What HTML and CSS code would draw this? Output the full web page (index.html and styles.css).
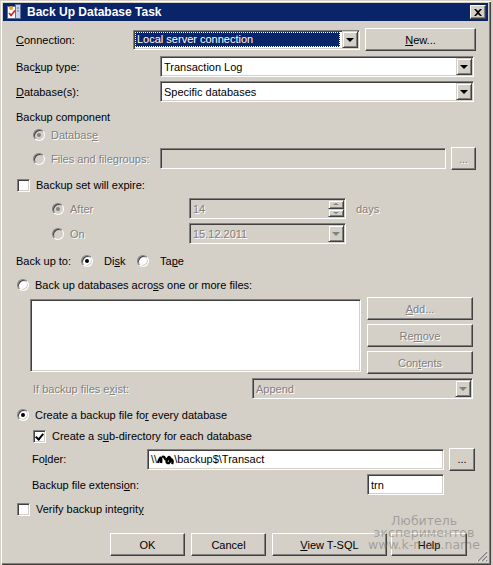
FILE: index.html
```html
<!DOCTYPE html>
<html lang="en">
<head>
  <meta charset="UTF-8" />
  <title>Back Up Database Task</title>
  <link rel="stylesheet" href="styles.css">
</head>
<body>
  <div class="window">
    <div class="titlebar">
      <svg class="app-icon" width="16" height="16" viewBox="0 0 16 16">
        <rect x="1.5" y="2.5" width="9" height="12" fill="#fff" stroke="#5a6f9a"/>
        <rect x="9.5" y="0.5" width="5" height="14" fill="#c8d4e8" stroke="#5a6f9a"/>
        <line x1="11" y1="4" x2="13" y2="4" stroke="#5a6f9a"/>
        <line x1="11" y1="7" x2="13" y2="7" stroke="#5a6f9a"/>
        <circle cx="5" cy="4" r="2" fill="#e8a030"/>
        <path d="M3 9 L5 11.5 L9 6.5" fill="none" stroke="#d02020" stroke-width="1.6"/>
      </svg>
      <span class="title">Back Up Database Task</span>
      <span class="close">
        <svg width="8" height="7" viewBox="0 0 8 7"><path d="M0 0h2l2 2 2-2h2L5 3.5 8 7H6L4 5 2 7H0l3-3.5z" fill="#000"/></svg>
      </span>
    </div>

    <div class="content">
      <div class="row r1">
        <span class="lbl w-conn"><u>C</u>onnection:</span>
        <div class="combo c-conn">
          <span class="val selected">Local server connection</span>
          <span class="drop"></span>
        </div>
        <button class="btn b-new"><u>N</u>ew...</button>
      </div>

      <div class="row r2">
        <span class="lbl w-type">Bac<u>k</u>up type:</span>
        <div class="combo c-wide">
          <span class="val">Transaction Log</span>
          <span class="drop"></span>
        </div>
      </div>

      <div class="row r3">
        <span class="lbl w-type"><u>D</u>atabase(s):</span>
        <div class="combo c-wide">
          <span class="val">Specific databases</span>
          <span class="drop"></span>
        </div>
      </div>

      <div class="row r4">
        <span class="lbl">Backup component</span>
      </div>

      <div class="row r5 ind1">
        <span class="radio checked disabled"></span>
        <span class="lbl dis">Databas<u>e</u></span>
      </div>

      <div class="row r6 ind1">
        <span class="radio disabled"></span>
        <span class="lbl dis w-files">Files and file<u>g</u>roups:</span>
        <div class="field disabled f-files"></div>
        <button class="btn b-dots dis">...</button>
      </div>

      <div class="row r7 ind0">
        <span class="check"></span>
        <span class="lbl">Backup set will expire:</span>
      </div>

      <div class="row r8 ind2">
        <span class="radio checked disabled"></span>
        <span class="lbl dis w-after">After</span>
        <div class="field disabled f-spin">
          <span class="val dis">14</span>
          <span class="spin">
            <span class="spin-btn up"></span>
            <span class="spin-btn down"></span>
          </span>
        </div>
        <span class="lbl dis days">days</span>
      </div>

      <div class="row r9 ind2">
        <span class="radio disabled"></span>
        <span class="lbl dis w-after">On</span>
        <div class="combo disabled f-spin">
          <span class="val dis">15.12.2011</span>
          <span class="drop"></span>
        </div>
      </div>

      <div class="row r10">
        <span class="lbl w-backto">Back up to:</span>
        <span class="radio checked"></span>
        <span class="lbl w-disk">Di<u>s</u>k</span>
        <span class="radio"></span>
        <span class="lbl">Ta<u>p</u>e</span>
      </div>

      <div class="row r11 ind0">
        <span class="radio"></span>
        <span class="lbl">Back up databases acro<u>s</u>s one or more files:</span>
      </div>

      <div class="row r12">
        <div class="listbox"></div>
        <div class="side-buttons">
          <button class="btn b-side dis"><u>A</u>dd...</button>
          <button class="btn b-side dis">Re<u>m</u>ove</button>
          <button class="btn b-side dis">Con<u>t</u>ents</button>
        </div>
      </div>

      <div class="row r13">
        <span class="lbl dis w-exist">If backup files e<u>x</u>ist:</span>
        <div class="combo disabled c-append">
          <span class="val dis">Append</span>
          <span class="drop"></span>
        </div>
      </div>

      <div class="row r14 ind0">
        <span class="radio checked"></span>
        <span class="lbl">Create a backup file fo<u>r</u> every database</span>
      </div>

      <div class="row r15 ind1">
        <span class="check checked"></span>
        <span class="lbl sub">Create a s<u>u</u>b-directory for each database</span>
      </div>

      <div class="row r16">
        <span class="lbl w-folder">Fo<u>l</u>der:</span>
        <div class="field f-folder">
          <span class="val">\\<svg class="scribble" width="17" height="11" viewBox="0 0 17 11"><path d="M1 9 C3 2 5 2 4 9 M5 3 C9 1 7 9 11 4 C13 1 15 6 12 9 C9 10 8 5 13 5 C16 5 16 8 15 10" fill="none" stroke="#000" stroke-width="2.4"/></svg>\backup$\Transact</span>
        </div>
        <button class="btn b-dots">...</button>
      </div>

      <div class="row r17">
        <span class="lbl w-ext">Backup file extensi<u>o</u>n:</span>
        <div class="field f-ext"><span class="val">trn</span></div>
      </div>

      <div class="row r18 ind0">
        <span class="check"></span>
        <span class="lbl">Verify backup integrit<u>y</u></span>
      </div>

      <div class="row r19">
        <button class="btn b-ok">OK</button>
        <button class="btn b-cancel">Cancel</button>
        <button class="btn b-tsql"><u>V</u>iew T-SQL</button>
        <button class="btn b-help">Help</button>
      </div>
    </div>

    <div class="watermark">Любитель<br>экспериментов<br>www.k-max.name</div>
    <svg class="grip" width="12" height="12" viewBox="0 0 12 12">
      <path d="M11 1 L1 11 M11 5 L5 11 M11 9 L9 11" stroke="#fff" stroke-width="1"/>
      <path d="M11 2 L2 11 M11 6 L6 11 M11 10 L10 11" stroke="#808080" stroke-width="1.2"/>
    </svg>
  </div>
</body>
</html>
```

FILE: styles.css
```css
body {
  margin: 0;
  background: #d4d0c8;
  font-family: "Liberation Sans", Arial, sans-serif;
  font-size: 11px;
  color: #000;
}

.window {
  position: relative;
  width: 491px;
  height: 565px;
  box-sizing: border-box;
  padding: 3px;
  background: #d4d0c8;
  box-shadow: inset 1px 1px #d4d0c8, inset 2px 2px #fff, inset -1px -1px #404040, inset -2px -2px #808080;
}

.titlebar {
  height: 18px;
  background: #0a246a;
  color: #fff;
  display: flex;
  align-items: center;
  padding: 0 2px 0 3px;
}

.app-icon {
  flex: none;
}

.title {
  margin-left: 5px;
  font-weight: bold;
  font-size: 12px;
  flex: 1;
}

.close {
  width: 16px;
  height: 14px;
  box-sizing: border-box;
  background: #d4d0c8;
  border: 1px solid;
  border-color: #fff #404040 #404040 #fff;
  box-shadow: inset -1px -1px #808080;
  display: flex;
  align-items: center;
  justify-content: center;
}

.content {
  padding-left: 13px;
}

.row {
  display: flex;
  align-items: center;
  height: 14px;
}

.lbl {
  white-space: nowrap;
  flex: none;
}

u {
  text-decoration: underline;
  text-underline-offset: 1px;
}

.dis {
  color: #808080;
  text-shadow: 1px 1px #fff;
}

/* vertical rhythm */
.r1 { margin-top: 7px; height: 23px; }
.r2 { margin-top: 5px; height: 21px; }
.r3 { margin-top: 4px; height: 21px; }
.r4 { margin-top: 8px; }
.r5 { margin-top: 4px; }
.r6 { margin-top: 5px; height: 23px; }
.r7 { margin-top: 8px; }
.r8 { margin-top: 6px; height: 21px; }
.r9 { margin-top: 4px; height: 21px; }
.r10 { margin-top: 10px; }
.r11 { margin-top: 10px; }
.r12 { margin-top: 5px; height: 76px; align-items: flex-start; }
.r13 { margin-top: 5px; height: 21px; }
.r14 { margin-top: 9px; }
.r15 { margin-top: 7px; }
.r16 { margin-top: 5px; height: 22px; }
.r17 { margin-top: 4px; height: 21px; }
.r18 { margin-top: 7px; }
.r19 { margin-top: 17px; height: 23px; }

.ind0 { padding-left: 1px; }
.ind1 { padding-left: 17px; }
.ind2 { padding-left: 36px; }

/* label widths */
.w-conn { width: 117px; }
.w-type { width: 144px; }
.w-files { width: 109px; }
.w-after { width: 119px; }
.w-backto { width: 65px; }
.w-disk { width: 33px; }
.w-exist { width: 236px; padding-left: 17px; box-sizing: border-box; }
.w-folder { width: 131px; padding-left: 16px; box-sizing: border-box; }
.w-ext { width: 351px; padding-left: 16px; box-sizing: border-box; }

.radio + .lbl,
.check + .lbl {
  margin-left: 6px;
}

.sub {
  margin-left: 8px;
}

/* controls */
.radio {
  flex: none;
  position: relative;
  width: 12px;
  height: 12px;
  box-sizing: border-box;
  border-radius: 50%;
  background: #fff;
  border: 1px solid;
  border-color: #808080 #fff #fff #808080;
  box-shadow: inset 1px 1px #404040, inset -1px -1px #d4d0c8;
}

.radio.disabled {
  background: #d4d0c8;
}

.radio.checked::after {
  content: "";
  position: absolute;
  left: 3px;
  top: 3px;
  width: 4px;
  height: 4px;
  border-radius: 50%;
  background: #000;
}

.radio.disabled.checked::after {
  background: #808080;
}

.r10 .radio {
  margin-right: 5px;
}

.check {
  flex: none;
  position: relative;
  width: 13px;
  height: 13px;
  box-sizing: border-box;
  background: #fff;
  border: 1px solid;
  border-color: #808080 #fff #fff #808080;
  box-shadow: inset 1px 1px #404040, inset -1px -1px #d4d0c8;
}

.check.checked::after {
  content: "";
  position: absolute;
  left: 3px;
  top: 1px;
  width: 3px;
  height: 6px;
  border: solid #000;
  border-width: 0 2px 2px 0;
  transform: rotate(40deg);
}

.field,
.combo {
  flex: none;
  box-sizing: border-box;
  height: 21px;
  background: #fff;
  border: 1px solid;
  border-color: #808080 #fff #fff #808080;
  box-shadow: inset 1px 1px #404040, inset -1px -1px #d4d0c8;
  display: flex;
  align-items: center;
  padding: 1px;
}

.field.disabled,
.combo.disabled {
  background: #d4d0c8;
}

.val {
  flex: 1;
  padding-left: 2px;
  white-space: nowrap;
  overflow: hidden;
}

.val.selected {
  background: #0a246a;
  color: #fff;
  outline: 1px dotted #fff;
  outline-offset: -1px;
  margin-right: 2px;
  height: 15px;
  line-height: 15px;
}

.drop {
  flex: none;
  position: relative;
  width: 16px;
  height: 17px;
  box-sizing: border-box;
  background: #d4d0c8;
  border: 1px solid;
  border-color: #d4d0c8 #404040 #404040 #d4d0c8;
  box-shadow: inset 1px 1px #fff, inset -1px -1px #808080;
}

.drop::after {
  content: "";
  position: absolute;
  left: 3px;
  top: 6px;
  border-left: 4px solid transparent;
  border-right: 4px solid transparent;
  border-top: 4px solid #000;
}

.disabled .drop::after {
  border-top-color: #808080;
}

.c-conn {
  width: 227px;
  height: 20px;
}

.c-wide {
  width: 314px;
}

.f-files {
  width: 286px;
}

.f-spin {
  width: 157px;
}

.spin {
  flex: none;
  display: flex;
  flex-direction: column;
  width: 16px;
  height: 17px;
}

.spin-btn {
  position: relative;
  flex: 1;
  box-sizing: border-box;
  background: #d4d0c8;
  border: 1px solid;
  border-color: #d4d0c8 #404040 #404040 #d4d0c8;
  box-shadow: inset 1px 1px #fff, inset -1px -1px #808080;
}

.spin-btn::after {
  content: "";
  position: absolute;
  left: 4px;
  top: 2px;
  border-left: 3px solid transparent;
  border-right: 3px solid transparent;
}

.spin-btn.up::after {
  border-bottom: 2px solid #808080;
}

.spin-btn.down::after {
  border-top: 2px solid #808080;
}

.days {
  margin-left: 10px;
}

.listbox {
  flex: none;
  margin: 2px 0 0 14px;
  width: 331px;
  height: 73px;
  box-sizing: border-box;
  background: #fff;
  border: 1px solid;
  border-color: #808080 #fff #fff #808080;
  box-shadow: inset 1px 1px #404040, inset -1px -1px #d4d0c8;
}

.side-buttons {
  margin-left: 6px;
  display: flex;
  flex-direction: column;
  gap: 4px;
}

.c-append {
  width: 221px;
}

.f-folder {
  width: 297px;
}

.scribble {
  vertical-align: -2px;
}

.f-ext {
  width: 77px;
}

.btn {
  flex: none;
  box-sizing: border-box;
  height: 23px;
  padding: 0;
  background: #d4d0c8;
  border: 1px solid;
  border-color: #fff #404040 #404040 #fff;
  box-shadow: inset -1px -1px #808080, inset 1px 1px #d4d0c8;
  font: inherit;
  color: #000;
}

.btn.dis {
  color: #808080;
}

.b-new {
  width: 111px;
  margin-left: 5px;
}

.b-dots {
  width: 25px;
  height: 23px;
  margin-left: 5px;
}

.r16 .b-dots {
  width: 26px;
  margin-left: 5px;
}

.b-side {
  width: 106px;
  height: 23px;
}

.b-ok {
  margin-left: 94px;
  width: 75px;
}

.b-cancel {
  margin-left: 6px;
  width: 75px;
}

.b-tsql {
  margin-left: 6px;
  width: 115px;
}

.b-help {
  margin-left: 4px;
  width: 76px;
}

.watermark {
  position: absolute;
  left: 366px;
  top: 515px;
  width: 116px;
  text-align: center;
  white-space: nowrap;
  font-family: "DejaVu Sans", sans-serif;
  font-size: 12.5px;
  line-height: 12px;
  color: rgba(110, 110, 110, 0.5);
}

.grip {
  position: absolute;
  right: 3px;
  bottom: 3px;
}
```
